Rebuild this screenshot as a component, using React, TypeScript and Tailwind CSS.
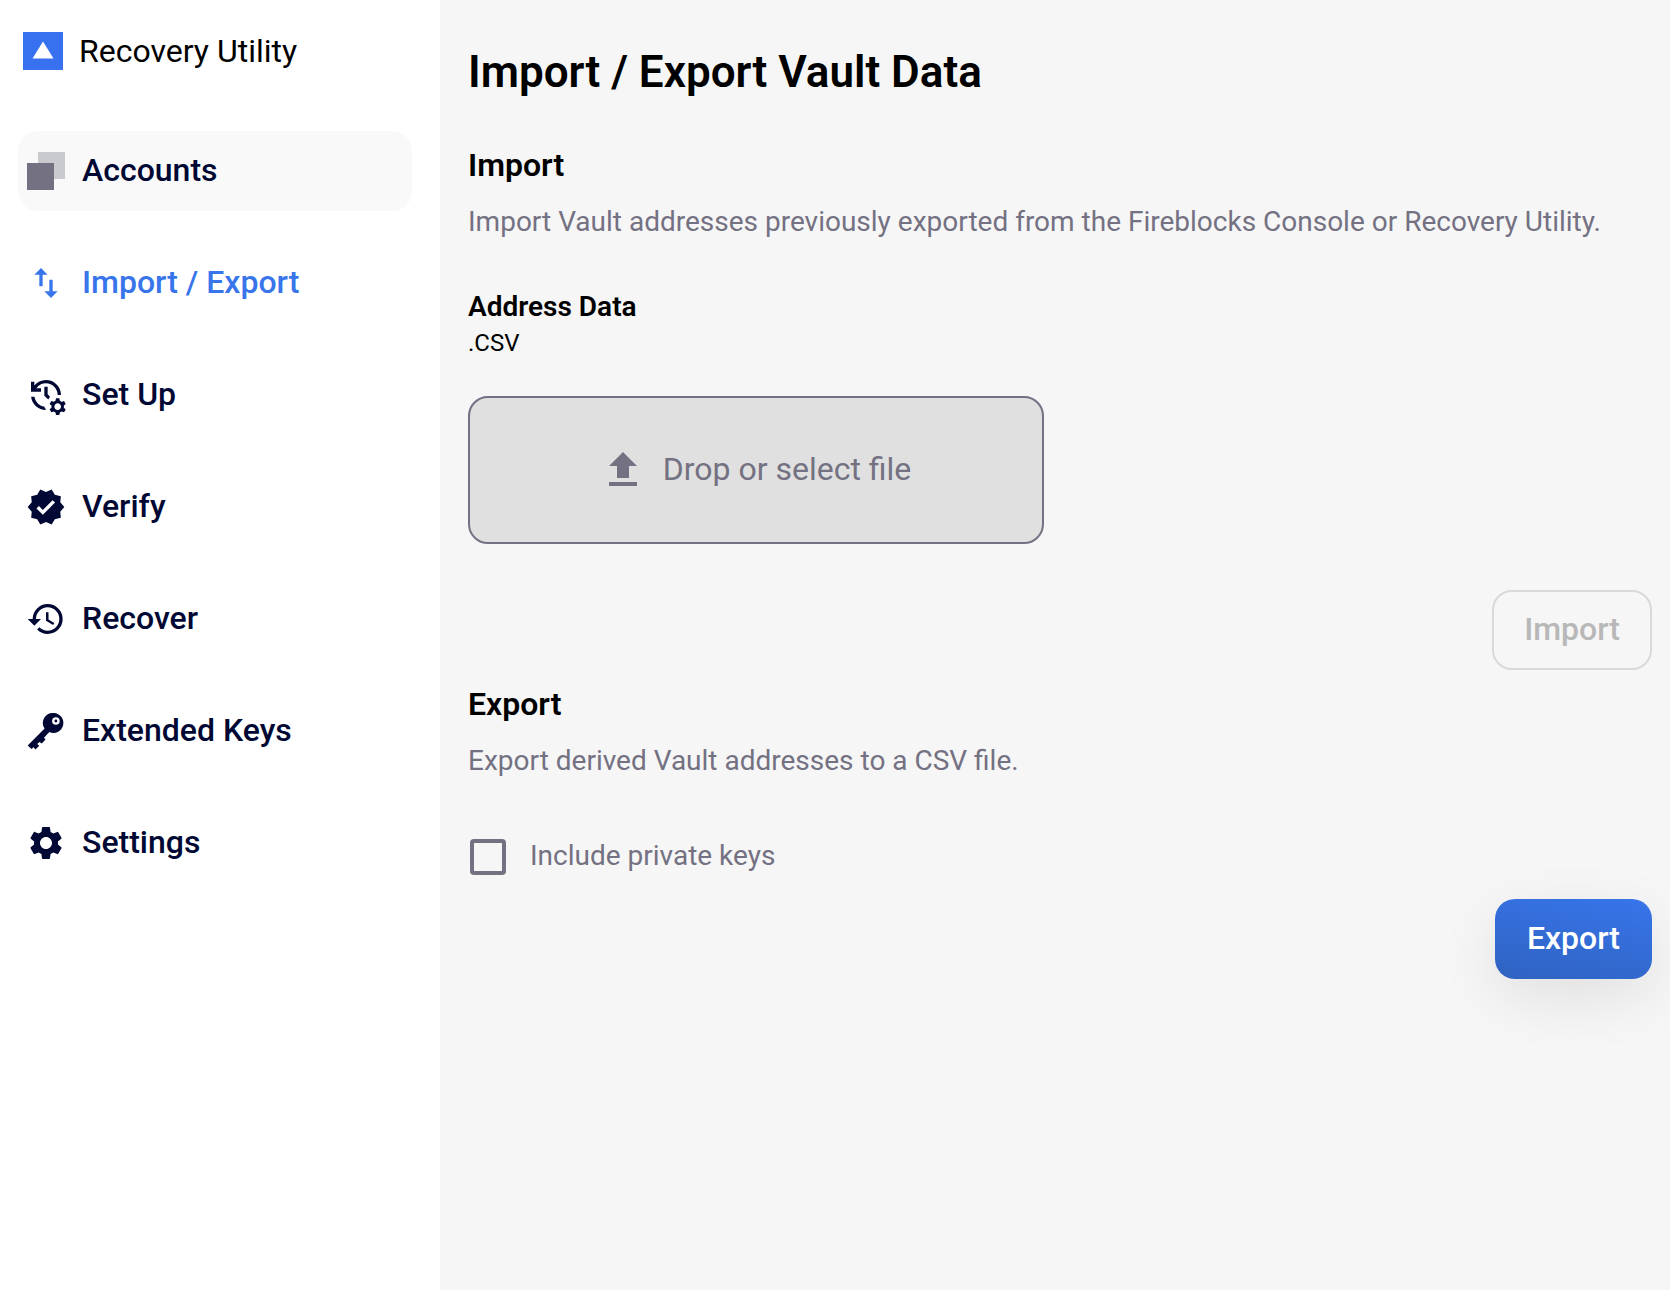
import { useState, type ReactNode } from "react";
import {
  MdFileUpload,
  MdHistory,
  MdImportExport,
  MdManageHistory,
  MdSettings,
  MdVerified,
} from "react-icons/md";

function AccountsIcon() {
  return (
    <svg viewBox="0 0 40 40" className="size-10" aria-hidden="true">
      <rect x="12" y="1" width="27" height="27" fill="#c9cace" />
      <rect x="1" y="12" width="27" height="27" fill="#737182" />
    </svg>
  );
}

function KeyIcon() {
  return (
    <svg viewBox="0 0 40 40" className="size-10" fill="currentColor" aria-hidden="true">
      <path
        fillRule="evenodd"
        d="M28 2a10 10 0 1 1-4.700 19.100L18 26.800l1.500 1.600-3.700 4-2.300-1.400-2.300 2 2 1.700-3.700 3.900-2-2.300-2 1.600L1.700 34.400 18.600 17.600A10 10 0 0 1 28 2Zm1.900 4.200a3.800 3.800 0 1 0 0 7.600 3.800 3.800 0 0 0 0-7.600Zm0 2.400a1.400 1.400 0 1 1 0 2.800 1.400 1.400 0 0 1 0-2.800Z"
      />
    </svg>
  );
}

type Item = { label: string; icon: ReactNode; state?: "hover" | "active" };

const items: Item[] = [
  { label: "Accounts", icon: <AccountsIcon />, state: "hover" },
  { label: "Import / Export", icon: <MdImportExport className="size-10" />, state: "active" },
  { label: "Set Up", icon: <MdManageHistory className="size-10" /> },
  { label: "Verify", icon: <MdVerified className="size-10" /> },
  { label: "Recover", icon: <MdHistory className="size-10" /> },
  { label: "Extended Keys", icon: <KeyIcon /> },
  { label: "Settings", icon: <MdSettings className="size-10" /> },
];

function Sidebar() {
  return (
    <aside className="w-[440px] shrink-0 bg-white px-[18px] pt-7">
      <div className="flex h-[46px] items-center gap-4 px-[5px]">
        <svg viewBox="0 0 40 38" className="h-[38px] w-10" aria-hidden="true">
          <path fill="#3871ef" d="M0 0h40v38H0z" />
          <path fill="#fff" d="M20 9.500l10.500 17h-21z" />
        </svg>
        <span className="text-[32px] leading-10">Recovery Utility</span>
      </div>
      <nav aria-label="Main" className="mt-[57px] w-[394px]">
        <ul className="flex flex-col gap-8">
          {items.map(({ label, icon, state }) => (
            <li key={label}>
              <a
                href="#"
                aria-current={state === "active" ? "page" : undefined}
                className={`flex h-20 items-center gap-4 rounded-[20px] px-2 text-[32px] font-medium ${
                  state === "active" ? "text-[#3875eb]" : "text-[#000833]"
                } ${state === "hover" ? "bg-[#f9f9f9]" : ""}`}
              >
                {icon}
                <span className="pb-0.5">{label}</span>
              </a>
            </li>
          ))}
        </ul>
      </nav>
    </aside>
  );
}

export default function App() {
  const [includeKeys, setIncludeKeys] = useState(false);
  return (
    <div className="flex min-h-screen bg-[#f6f6f6] font-['Roboto',sans-serif] text-black">
      <Sidebar />
      <main className="min-w-0 flex-1 pt-11 pr-[18px] pl-7">
        <h1 className="text-[44px] leading-14 font-semibold">Import / Export Vault Data</h1>

        <section aria-labelledby="import-title" className="mt-10">
          <h2 id="import-title" className="text-[32px] leading-[50px] font-semibold">Import</h2>
          <p className="mt-2 text-[28px] leading-12 text-[#737182]">
            Import Vault addresses previously exported from the Fireblocks Console or Recovery Utility.
          </p>
          <h3 className="mt-[41px] text-[28px] leading-10 font-semibold">Address Data</h3>
          <p className="text-2xl">.CSV</p>
          <label className="mt-[37px] flex h-[148px] w-[576px] cursor-pointer items-center justify-center gap-4 rounded-[20px] border-2 border-[#737182] bg-[#e0e0e0] pr-0.5 text-[32px] text-[#737182]">
            <input type="file" accept=".csv" className="sr-only" />
            <MdFileUpload className="size-12" aria-hidden="true" />
            <span className="pb-0.5">Drop or select file</span>
          </label>
          <div className="mt-[46px] flex justify-end">
            <button
              type="button"
              disabled
              className="h-20 rounded-[20px] border-2 border-[#d9d9d9] px-[30px] pb-0.5 text-[32px] font-medium text-[#b8b8b8]"
            >
              Import
            </button>
          </div>
        </section>

        <section aria-labelledby="export-title" className="mt-[9px]">
          <h2 id="export-title" className="text-[32px] leading-[50px] font-semibold">Export</h2>
          <p className="mt-2 text-[28px] leading-12 text-[#737182]">
            Export derived Vault addresses to a CSV file.
          </p>
          <label className="mt-12 flex h-12 w-fit cursor-pointer items-center gap-6 pl-0.5 text-[28px] text-[#737182]">
            <input
              type="checkbox"
              checked={includeKeys}
              onChange={(e) => setIncludeKeys(e.target.checked)}
              className="size-9 appearance-none rounded-sm border-4 border-[#737182] checked:bg-[#3875eb]"
            />
            <span className="pb-0.5">Include private keys</span>
          </label>
          <div className="mt-[18px] flex justify-end">
            <button
              type="button"
              className="h-20 rounded-[20px] bg-linear-[12deg,#2f63c1,#3875eb] px-8 pb-0.5 text-[32px] font-medium text-white shadow-[0_18px_60px_rgba(0,8,20,0.09)]"
            >
              Export
            </button>
          </div>
        </section>
      </main>
    </div>
  );
}
